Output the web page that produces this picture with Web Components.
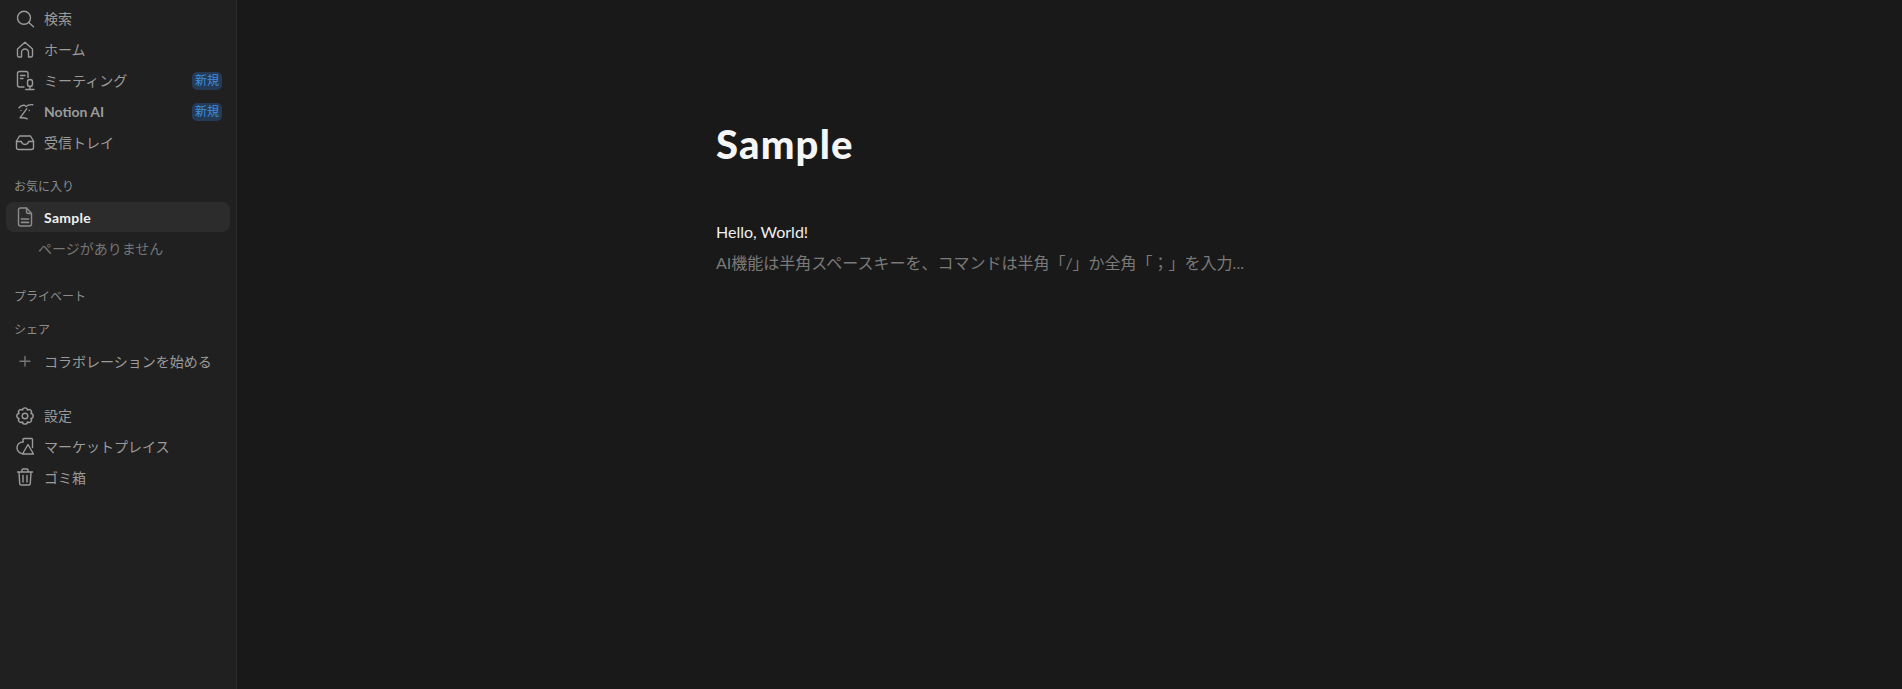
<!DOCTYPE html>
<html lang="ja">
<head>
<meta charset="utf-8">
<title>Sample</title>
<style>
html, body { margin: 0; height: 100%; background: #191919; }
body { font-family: Lato, "Noto Sans CJK JP", sans-serif; overflow: hidden; }
</style>
</head>
<body>
<app-shell>
  <side-bar slot="side">
    <nav-item icon="search">検索</nav-item>
    <nav-item icon="home">ホーム</nav-item>
    <nav-item icon="meeting" badge="新規">ミーティング</nav-item>
    <nav-item icon="ai" badge="新規" strong>Notion AI</nav-item>
    <nav-item icon="inbox">受信トレイ</nav-item>
    <nav-label gap="20">お気に入り</nav-label>
    <nav-item icon="doc" active>Sample</nav-item>
    <nav-item dim>ページがありません</nav-item>
    <nav-label gap="24">プライベート</nav-label>
    <nav-label gap="9">シェア</nav-label>
    <nav-item icon="plus" gap="1">コラボレーションを始める</nav-item>
    <nav-item icon="gear" gap="23">設定</nav-item>
    <nav-item icon="market">マーケットプレイス</nav-item>
    <nav-item icon="trash">ゴミ箱</nav-item>
  </side-bar>
  <note-page title-text="Sample">
    <p>Hello, World!</p>
    <p class="hint">AI機能は半角スペースキーを、コマンドは半角「/」か全角「；」を入力...</p>
  </note-page>
</app-shell>
<script>
const ICONS = {
  search: '<circle cx="11" cy="10.8" r="6.5"/><path d="M15.8 15.4l4.7 4.3"/>',
  home: '<path d="M4.5 11L12 4.2 19.5 11v6.5a1.5 1.5 0 0 1-1.5 1.5h-2.5v-4.5a3.5 3.5 0 0 0-7 0V19H6a1.5 1.5 0 0 1-1.5-1.5z"/>',
  meeting: '<path d="M11 18H6.5a2 2 0 0 1-2-2V4.5a2 2 0 0 1 2-2H13a2 2 0 0 1 2 2v4"/><path d="M7.5 6.5h4.5M7.5 9.5h2.5"/><rect x="14.5" y="10.5" width="5" height="7" rx="2.5"/><path d="M12.7 20.5H21M17 17.5v3"/>',
  ai: '<path d="M6 7.8c1.500-1.900 4-2.900 6-2.300M13 6.500c1.900-1.500 4.500-2.200 6.700-1.700"/><path d="M13.7 8.800L7 17.800c2.500-.2 5-.1 7.300 1"/><path d="M8 10.500h.01M16.300 10.500h.01"/>',
  inbox: '<path d="M6.5 5h11l3 5v6.5a2 2 0 0 1-2 2h-13a2 2 0 0 1-2-2V10z"/><path d="M3.5 10.5h5c.3 2 1.8 3 3.500 3s3.200-1 3.500-3h5"/>',
  doc: '<path d="M5.5 5a2 2 0 0 1 2-2h6l5 5.500V19a2 2 0 0 1-2 2h-9a2 2 0 0 1-2-2z"/><path d="M13.500 3v3.500a2 2 0 0 0 2 2h3"/><path d="M8.500 14h7M8.500 17.300h7" stroke-width="1.7"/>',
  plus: '<path d="M12 6.500v9.500M7 11.300h10"/>',
  gear: '<circle cx="12" cy="12" r="2.8"/><path d="M14.45 6.09A2.46 2.46 0 0 1 17.91 9.55A2.46 2.46 0 0 1 17.91 14.45A2.46 2.46 0 0 1 14.45 17.91A2.46 2.46 0 0 1 9.55 17.91A2.46 2.46 0 0 1 6.09 14.45A2.46 2.46 0 0 1 6.09 9.55A2.46 2.46 0 0 1 9.55 6.09A2.46 2.46 0 0 1 14.45 6.09z"/>',
  market: '<path d="M10 7V4.500a1 1 0 0 1 1-1h7.500a1 1 0 0 1 1 1v8"/><path d="M10 7A5.800 5.800 0 1 0 9.600 18.600"/><path d="M15 9.500l5.500 9.500H9.500z"/>',
  trash: '<path d="M4.500 6h15M9 6V4a1 1 0 0 1 1-1h4a1 1 0 0 1 1 1v2M6 6l.7 11.500a1.500 1.500 0 0 0 1.500 1.500h7.600a1.500 1.500 0 0 0 1.500-1.500L18 6"/><path d="M10 9.500V16M14 9.500V16"/>'
};

class AppShell extends HTMLElement {
  constructor() {
    super();
    this.shadowDom = this.attachShadow({ mode: "open" });
  }
  connectedCallback() {
    this.shadowDom.innerHTML = `
    <style>
      :host { display: flex; height: 689px; }
      .side { display: block; flex: 0 0 237px; box-sizing: border-box; background: #202020; border-right: 1px solid #2a2a2a; }
      main { flex: 1; background: #191919; }
    </style>
    <div class="side"><slot name="side"></slot></div>
    <main><slot></slot></main>`;
  }
}

class SideBar extends HTMLElement {
  constructor() {
    super();
    this.shadowDom = this.attachShadow({ mode: "open" });
  }
  connectedCallback() {
    this.shadowDom.innerHTML = `
    <style>
      :host { display: flex; flex-direction: column; padding: 3px 6px 0 6px; }
    </style>
    <slot></slot>`;
  }
}

class NavItem extends HTMLElement {
  constructor() {
    super();
    this.shadowDom = this.attachShadow({ mode: "open" });
  }
  connectedCallback() {
    const icon = this.getAttribute("icon");
    const badge = this.getAttribute("badge");
    const gap = this.getAttribute("gap");
    if (gap) this.style.marginTop = gap + "px";
    this.shadowDom.innerHTML = `
    <style>
      :host { display: flex; align-items: center; height: 31px; border-radius: 8px; padding: 0 8px 0 7px; font-size: 14px; color: #9b9b9b; font-weight: 400; }
      :host([strong]) { font-weight: 700; }
      :host([active]) { background: #2c2c2c; color: #f0f0f0; font-weight: 700; height: 30px; margin-bottom: 1px; letter-spacing: .3px; }
      :host([dim]) { color: #757575; padding-left: 32px; }
      .ic { flex: 0 0 24px; height: 24px; margin-right: 7px; }
      svg { display: block; width: 24px; height: 24px; fill: none; stroke: #9a9a9a; stroke-width: 1.4; stroke-linecap: round; stroke-linejoin: round; }
      :host([icon="plus"]) svg { stroke: #777; }
      :host([active]) svg { stroke: #8c8c8c; }
      .text { flex: 1; white-space: nowrap; padding-bottom: 2px; }
      :host([strong]) .text, :host([active]) .text { padding-bottom: 0; }
      .badge { font-size: 12px; font-weight: 400; line-height: 18px; padding: 0 3px; border-radius: 5px; background: #253a56; color: #3f8edf; }
    </style>
    ${icon ? `<span class="ic"><svg viewBox="0 0 24 24">${ICONS[icon]}</svg></span>` : ""}
    <span class="text"><slot></slot></span>
    ${badge ? `<span class="badge">${badge}</span>` : ""}`;
  }
}

class NavLabel extends HTMLElement {
  constructor() {
    super();
    this.shadowDom = this.attachShadow({ mode: "open" });
  }
  connectedCallback() {
    const gap = this.getAttribute("gap");
    if (gap) this.style.marginTop = gap + "px";
    this.shadowDom.innerHTML = `
    <style>
      :host { display: block; height: 18px; line-height: 18px; padding-left: 8px; margin-bottom: 6px; font-size: 12px; color: #8c8c8c; }
    </style>
    <slot></slot>`;
  }
}

class NotePage extends HTMLElement {
  constructor() {
    super();
    this.shadowDom = this.attachShadow({ mode: "open" });
  }
  connectedCallback() {
    this.shadowDom.innerHTML = `
    <style>
      :host { display: block; padding: 118px 0 0 479px; }
      h1 { margin: 0 0 46px; font-size: 40px; line-height: 52px; font-weight: 900; letter-spacing: 1.2px; color: #f5f5f5; }
      ::slotted(p) { margin: 0; font-size: 16px; line-height: 31px; color: #f0f0f0; }
      ::slotted(p.hint) { color: #7a7a7a; }
    </style>
    <h1>${this.getAttribute("title-text")}</h1>
    <slot></slot>`;
  }
}

customElements.define("app-shell", AppShell);
customElements.define("side-bar", SideBar);
customElements.define("nav-item", NavItem);
customElements.define("nav-label", NavLabel);
customElements.define("note-page", NotePage);
</script>
</body>
</html>
